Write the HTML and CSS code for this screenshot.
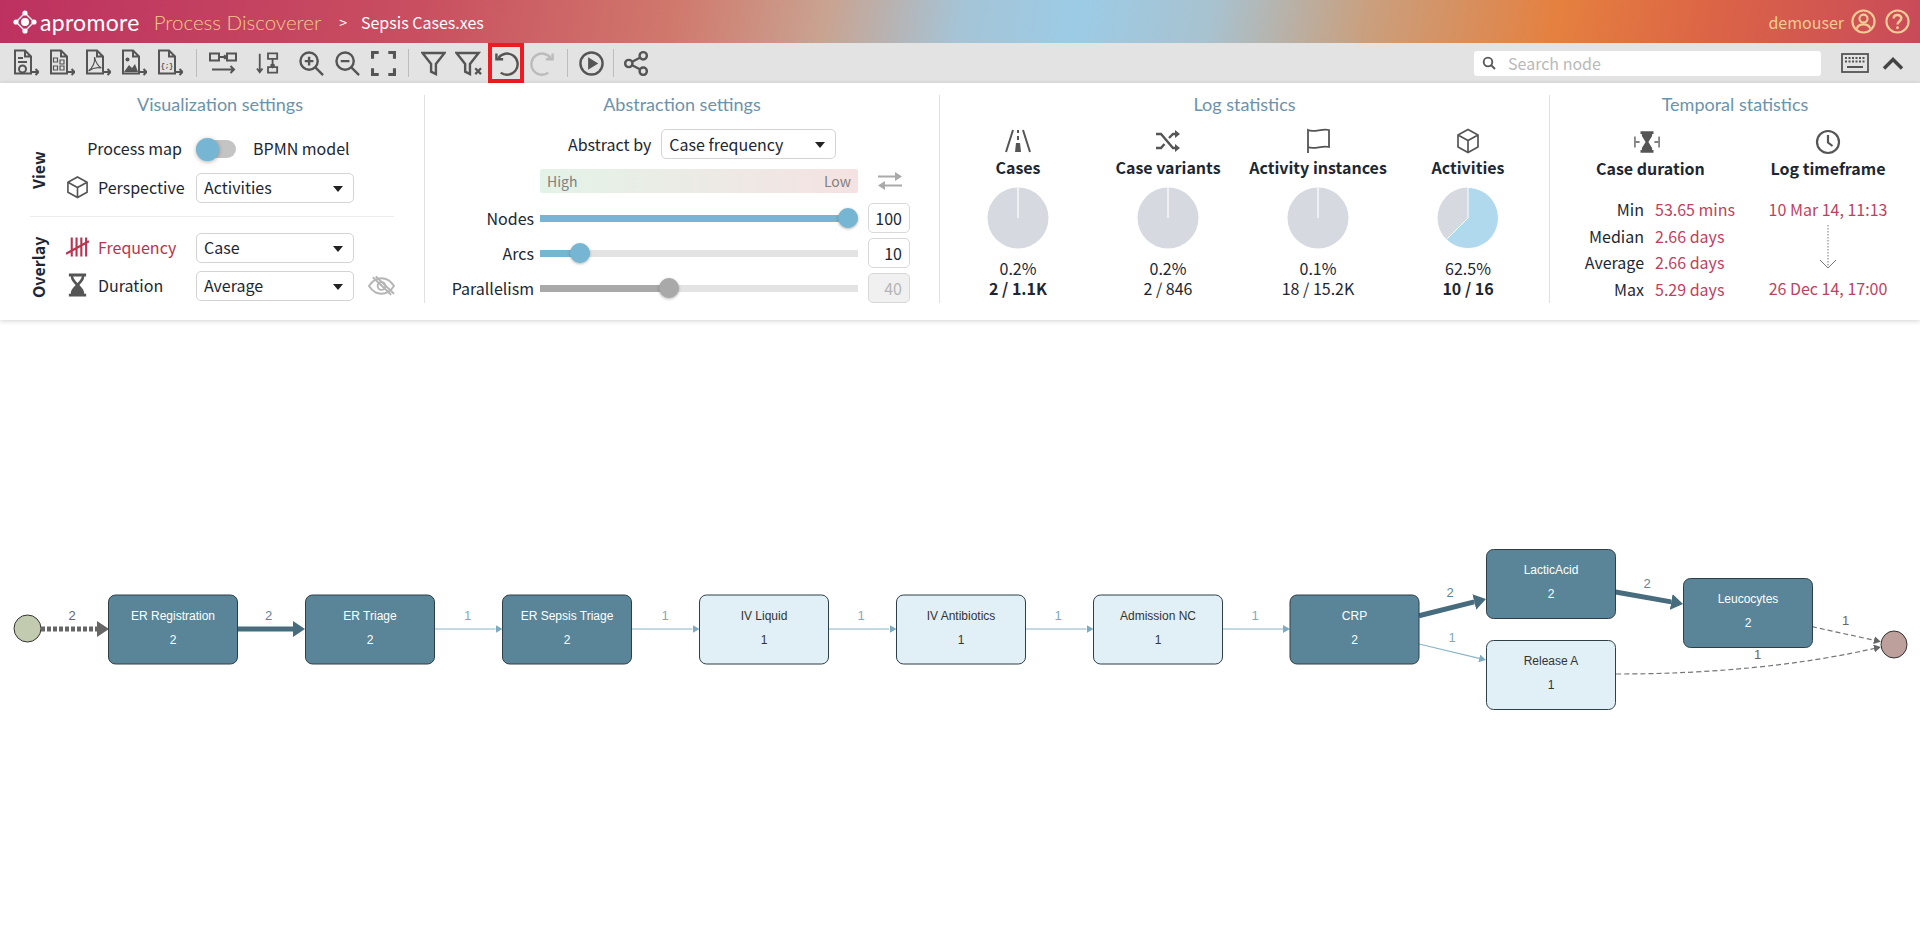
FILE: index.html
```html
<!DOCTYPE html>
<html>
<head>
    <meta charset="utf-8">
    <title>Process Discoverer</title>
    <link rel="stylesheet" href="styles.css">
</head>
<body>
    <!-- top header -->
    <header class="header">
        <svg class="logo-mark" viewBox="0 0 24 24" fill="#fff">
            <path d="M12 3 21 12 12 21 3 12z" fill="none" stroke="#fff" stroke-width="1.3"/>
            <circle cx="12" cy="12" r="4"/>
            <circle cx="12" cy="3" r="2.6"/>
            <circle cx="12" cy="21" r="2.6"/>
            <circle cx="3" cy="12" r="2.6"/>
            <circle cx="21" cy="12" r="2.6"/>
        </svg>
        <span class="logo-text">apromore</span>
        <span class="app-name">Process Discoverer</span>
        <span class="crumb">&gt;</span>
        <span class="file-name">Sepsis Cases.xes</span>
        <span class="user-name">demouser</span>
        <svg class="head-icon user-icon" viewBox="0 0 26 26" fill="none" stroke="#f7cb94" stroke-width="2.2">
            <circle cx="13" cy="13" r="11.5"/>
            <circle cx="13" cy="10" r="4.2"/>
            <path d="M6 20.5c1-3.5 3.5-4.5 7-4.5s6 1 7 4.5"/>
        </svg>
        <svg class="head-icon" viewBox="0 0 26 26" fill="none" stroke="#f7cb94" stroke-width="2.2">
            <circle cx="13" cy="13" r="11.5"/>
            <path d="M9 10c0-2.500 1.800-3.800 4-3.800s4 1.400 4 3.500c0 3-4 3-4 6.300" stroke-width="2.600"/>
            <circle cx="13" cy="19.500" r="1.500" fill="#f7cb94" stroke="none"/>
        </svg>
    </header>

    <!-- toolbar -->
    <nav class="toolbar">
        <div class="tool">
            <svg class="ico" viewBox="0 0 26 28">
                <path d="M2 1.500h10l6 6v17H2zM12 1.500v6h6"/><path d="M5 9h5M5 13h9"/>
                <circle cx="9.500" cy="20" r="3.500"/><path d="M18 23h7M22.500 20l3 3-3 3"/>
            </svg>
        </div>
        <div class="tool">
            <svg class="ico" viewBox="0 0 26 28">
                <path d="M2 1.500h10l6 6v17H2zM12 1.500v6h6"/>
                <path d="M4.500 9h4v4h-4zM11 11h4v4h-4zM4.500 17h4v4h-4zM11 17h4v4h-4z" stroke-width="1.200"/>
                <path d="M18 23h7M22.500 20l3 3-3 3"/>
            </svg>
        </div>
        <div class="tool">
            <svg class="ico" viewBox="0 0 26 28">
                <path d="M2 1.500h10l6 6v17H2zM12 1.500v6h6"/>
                <path d="M9.500 8c1 5-2 11-6 14 4-3 9-4 13-3-3-1-6-6-7-11z" stroke-width="1.200"/>
                <path d="M18 23h7M22.500 20l3 3-3 3"/>
            </svg>
        </div>
        <div class="tool">
            <svg class="ico" viewBox="0 0 26 28">
                <path d="M2 1.500h10l6 6v17H2zM12 1.500v6h6"/>
                <circle cx="6.500" cy="10.500" r="2" class="solid"/>
                <path d="M3 23l5-7 3 3 3-4 3 8z" class="solid"/>
                <path d="M18 23h7M22.500 20l3 3-3 3"/>
            </svg>
        </div>
        <div class="tool">
            <svg class="ico" viewBox="0 0 26 28">
                <path d="M2 1.500h10l6 6v17H2zM12 1.500v6h6"/>
                <text x="10" y="18.500" class="ico-text">{;}</text>
                <path d="M18 23h7M22.500 20l3 3-3 3"/>
            </svg>
        </div>
        <span class="tool-sep"></span>
        <div class="tool">
            <svg class="ico ico-wide" viewBox="0 0 28 22">
                <path d="M1 1.500h9v7H1zM18 1.500h9v7h-9zM10 5h7M15 3.300 17 5l-2 1.700"/>
                <path d="M3 17.500h22M21.500 14l3.500 3.500-3.500 3.500"/>
            </svg>
        </div>
        <div class="tool tool-push">
            <svg class="ico ico-wide" viewBox="0 0 26 24">
                <path d="M4 2v20M1 18l3 4 3-4"/>
                <path d="M13 1.500h10v6H13zM13 16.500h10v6H13zM18 7.500v9M16 13.500l2 3 2-3"/>
            </svg>
        </div>
        <div class="tool tool-push-sm">
            <svg class="ico ico-zoom" viewBox="0 0 26 26">
                <circle cx="10.500" cy="10.500" r="9"/><path d="M17 17l8 8M6 10.500h9M10.500 6v9"/>
            </svg>
        </div>
        <div class="tool">
            <svg class="ico ico-zoom" viewBox="0 0 26 26">
                <circle cx="10.500" cy="10.500" r="9"/><path d="M17 17l8 8M6 10.500h9"/>
            </svg>
        </div>
        <div class="tool">
            <svg class="ico ico-zoom ico-heavy" viewBox="0 0 26 26">
                <path d="M1.500 8V1.500H8M18 1.500h6.500V8M24.500 18v6.500H18M8 24.500H1.500V18"/>
            </svg>
        </div>
        <span class="tool-sep tool-sep-near"></span>
        <div class="tool">
            <svg class="ico ico-zoom" viewBox="0 0 26 26">
                <path d="M1.500 2h23L15.500 13.500V24l-5-2.500v-8z"/>
            </svg>
        </div>
        <div class="tool">
            <svg class="ico ico-filterx" viewBox="0 0 29 26">
                <path d="M1.500 2h23L15.500 13.500V24l-5-2.500v-8z"/><path d="M21 18l6 6M27 18l-6 6" stroke-width="2.400"/>
            </svg>
        </div>
        <div class="tool tool-active">
            <svg class="ico ico-zoom" viewBox="0 0 26 26">
                <path d="M4.500 7.500A11 11 0 1 1 7 22.500"/><path d="M2.500 2.500v6h7"/>
            </svg>
        </div>
        <div class="tool">
            <svg class="ico ico-zoom ico-off" viewBox="0 0 26 26">
                <path d="M21.500 7.500A11 11 0 1 0 19 22.500"/><path d="M23.500 2.500v6h-7"/>
            </svg>
        </div>
        <span class="tool-sep tool-sep-tight"></span>
        <div class="tool tool-narrow">
            <svg class="ico ico-zoom" viewBox="0 0 26 26">
                <circle cx="13" cy="13" r="11.500"/><path d="M9.500 6.500 20 13 9.500 19.500z" class="solid"/>
            </svg>
        </div>
        <span class="tool-sep tool-sep-last"></span>
        <div class="tool tool-narrow">
            <svg class="ico ico-zoom" viewBox="0 0 26 26">
                <circle cx="5" cy="13" r="3.800"/><circle cx="20" cy="5" r="3.800"/><circle cx="20" cy="21" r="3.800"/>
                <path d="M8.500 11.200 16.500 7M8.500 14.800 16.500 19"/>
            </svg>
        </div>

        <div class="search">
            <svg class="search-ico" viewBox="0 0 14 14" fill="none" stroke="#555" stroke-width="1.800">
                <circle cx="6" cy="6" r="4.300"/><path d="M9 9l4 4"/>
            </svg>
            <span>Search node</span>
        </div>
        <svg class="kbd-ico" viewBox="0 0 28 20" fill="none" stroke="#555" stroke-width="1.800">
            <rect x="1" y="1" width="26" height="18"/>
            <path d="M4 5h20M4 8.500h20" stroke-dasharray="2 1.500" stroke-width="1.800"/>
            <path d="M6 14h16" stroke-width="2"/>
        </svg>
        <svg class="chev-ico" viewBox="0 0 22 13" fill="none" stroke="#444" stroke-width="3.500">
            <path d="M2 11.500 11 2.500l9 9"/>
        </svg>
    </nav>

    <!-- settings and statistics -->
    <section class="panel">
        <div class="block block-vis">
            <h3 class="block-title">Visualization settings</h3>
            <div class="vis-group vis-view">
                <div class="vert-label">View</div>
                <div class="vis-rows">
                    <div class="vis-row vis-toggle">
                        <span class="vis-label vis-label-right">Process map</span>
                        <span class="toggle"><span class="toggle-knob"></span></span>
                        <span class="vis-label">BPMN model</span>
                    </div>
                    <div class="vis-row">
                        <span class="vis-label">
                            <svg class="lab-ico" viewBox="0 0 24 24" fill="none" stroke="#555" stroke-width="1.700">
                                <path d="M12 1.500 22 7v10.500L12 23 2 17.500V7zM2 7l10 5.500L22 7M12 12.500V23"/>
                            </svg>
                            Perspective
                        </span>
                        <div class="select select-vis">Activities<i class="caret"></i></div>
                    </div>
                </div>
            </div>
            <div class="vis-line"></div>
            <div class="vis-group vis-overlay">
                <div class="vert-label">Overlay</div>
                <div class="vis-rows">
                    <div class="vis-row">
                        <span class="vis-label vis-active">
                            <svg class="lab-ico" viewBox="0 0 24 24" fill="none" stroke="#b8344f" stroke-width="2.200">
                                <path d="M6 2v20M11 2v20M16 2v20M21 2v20M0 19 24 6"/>
                            </svg>
                            Frequency
                        </span>
                        <div class="select select-vis">Case<i class="caret"></i></div>
                    </div>
                    <div class="vis-row">
                        <span class="vis-label">
                            <svg class="lab-ico" viewBox="0 0 24 24" fill="#555">
                                <path d="M3 0h18v3h-2c0 4-3 6.500-5 9 2 2.500 5 5 5 9h2v3H3v-3h2c0-4 3-6.500 5-9-2-2.500-5-5-5-9H3zM7.500 3c.3 2.500 3 5 4.500 7 1.500-2 4.200-4.500 4.500-7z"/>
                            </svg>
                            Duration
                        </span>
                        <div class="select select-vis">Average<i class="caret"></i></div>
                        <svg class="eye-ico" viewBox="0 0 28 20" fill="none" stroke="#b5b5b5" stroke-width="2">
                            <path d="M1 10c4-6 8-8 13-8s9 2 13 8c-4 6-8 8-13 8S5 16 1 10z"/>
                            <circle cx="14" cy="10" r="4"/><path d="M5 1l19 18M8 0l19 18"/>
                        </svg>
                    </div>
                </div>
            </div>
        </div>

        <div class="block block-abs">
            <h3 class="block-title">Abstraction settings</h3>
            <div class="abs-by">
                <span>Abstract by</span>
                <div class="select select-abs">Case frequency<i class="caret"></i></div>
            </div>
            <div class="abs-scale">
                <div class="scale-bar"><span>High</span><span>Low</span></div>
                <svg class="swap-ico" viewBox="0 0 24 18" fill="#aaa">
                    <path d="M0 3.500h17V0l7 4.500-7 4.500V5.500H0z"/>
                    <path d="M24 12.500H7V9l-7 4.500L7 18v-3.500h17z"/>
                </svg>
            </div>
            <div class="slider-row">
                <span class="slider-label">Nodes</span>
                <div class="slider"><div class="slider-fill" style="width: 97%"></div><span class="slider-knob"></span></div>
                <div class="num-box">100</div>
            </div>
            <div class="slider-row">
                <span class="slider-label">Arcs</span>
                <div class="slider"><div class="slider-fill" style="width: 12.500%"></div><span class="slider-knob"></span></div>
                <div class="num-box">10</div>
            </div>
            <div class="slider-row slider-off">
                <span class="slider-label">Parallelism</span>
                <div class="slider"><div class="slider-fill" style="width: 40.500%"></div><span class="slider-knob"></span></div>
                <div class="num-box">40</div>
            </div>
        </div>

        <div class="block block-log">
            <h3 class="block-title">Log statistics</h3>
            <div class="log-grid">
                <div class="stat">
                    <svg class="stat-ico" viewBox="0 0 26 26" fill="none" stroke="#555" stroke-width="2">
                        <path d="M8 2 1 24M18 2l7 22M13 2v3M13 8v4" /><path d="M11 15h4l1 9h-6z" fill="#555" stroke="none"/>
                    </svg>
                    <b class="stat-name">Cases</b>
                    <svg class="pie" viewBox="0 0 64 64">
                        <circle cx="32" cy="32" r="30.500" fill="#d6d9e0"/><path d="M32 1.500V32" stroke="#fff" stroke-width="1.200"/>
                    </svg>
                    <span class="stat-pct">0.2%</span>
                    <b class="stat-num">2 / 1.1K</b>
                </div>
                <div class="stat">
                    <svg class="stat-ico" viewBox="0 0 26 26" fill="none" stroke="#555" stroke-width="2.400">
                        <path d="M1 6h5l12 14h4M1 20h5l3.500-4M14 10l4-4h4"/>
                        <path d="M20 2l5 4-5 4zM20 16l5 4-5 4z" fill="#555" stroke="none"/>
                    </svg>
                    <b class="stat-name">Case variants</b>
                    <svg class="pie" viewBox="0 0 64 64">
                        <circle cx="32" cy="32" r="30.500" fill="#d6d9e0"/><path d="M32 1.500V32" stroke="#fff" stroke-width="1.200"/>
                    </svg>
                    <span class="stat-pct">0.2%</span>
                    <span class="stat-num">2 / 846</span>
                </div>
                <div class="stat">
                    <svg class="stat-ico" viewBox="0 0 26 26" fill="none" stroke="#555" stroke-width="1.800">
                        <path d="M3 25V2c6 3 14-2 21 0v17c-7-2-15 3-21 0"/>
                    </svg>
                    <b class="stat-name">Activity instances</b>
                    <svg class="pie" viewBox="0 0 64 64">
                        <circle cx="32" cy="32" r="30.500" fill="#d6d9e0"/><path d="M32 1.500V32" stroke="#fff" stroke-width="1.200"/>
                    </svg>
                    <span class="stat-pct">0.1%</span>
                    <span class="stat-num">18 / 15.2K</span>
                </div>
                <div class="stat">
                    <svg class="stat-ico" viewBox="0 0 24 26" fill="none" stroke="#555" stroke-width="1.700">
                        <path d="M12 1.500 22 7v12L12 24.500 2 19V7zM2 7l10 5.500L22 7M12 12.500v12"/>
                    </svg>
                    <b class="stat-name">Activities</b>
                    <svg class="pie" viewBox="0 0 64 64">
                        <circle cx="32" cy="32" r="30.500" fill="#d6d9e0"/>
                        <path d="M32 32V1.500A30.500 30.500 0 1 1 10.400 53.600z" fill="#b0d9ee" stroke="#fff" stroke-width="1"/>
                    </svg>
                    <span class="stat-pct">62.5%</span>
                    <b class="stat-num">10 / 16</b>
                </div>
            </div>
        </div>

        <div class="block block-temp">
            <h3 class="block-title">Temporal statistics</h3>
            <div class="temp-grid">
                <div class="temp-col">
                    <svg class="stat-ico" viewBox="0 0 28 26" fill="#555">
                        <path d="M7 1.500h14v3h-1.500v2L15.500 13l4 6.500v2H21v3H7v-3h1.500v-2l4-6.500-4-6.500v-2H7z"/>
                        <path d="M1 7v12M27 7v12M2 13h4M26 13h-4" stroke="#555" stroke-width="1.400"/>
                    </svg>
                    <b class="stat-name">Case duration</b>
                    <div class="dur-table">
                        <span class="dur-key">Min</span><span class="dur-val">53.65 mins</span>
                        <span class="dur-key">Median</span><span class="dur-val">2.66 days</span>
                        <span class="dur-key">Average</span><span class="dur-val">2.66 days</span>
                        <span class="dur-key">Max</span><span class="dur-val">5.29 days</span>
                    </div>
                </div>
                <div class="temp-col">
                    <svg class="stat-ico" viewBox="0 0 26 26" fill="none" stroke="#555" stroke-width="2.200">
                        <circle cx="13" cy="13" r="11"/><path d="M13 6v7.500l4.500 3.500"/>
                    </svg>
                    <b class="stat-name">Log timeframe</b>
                    <div class="time-col">
                        <span class="dur-val">10 Mar 14, 11:13</span>
                        <svg class="time-arrow" viewBox="0 0 18 44" fill="none" stroke="#777">
                            <path d="M9 0v43" stroke-dasharray="1.500 1.500"/><path d="M1 35l8 8 8-8"/>
                        </svg>
                        <span class="dur-val">26 Dec 14, 17:00</span>
                    </div>
                </div>
            </div>
        </div>
    </section>

    <!-- process map -->
    <main class="canvas">
        <svg class="map" viewBox="0 320 1920 610">
            <defs>
                <marker id="head-gray" markerUnits="userSpaceOnUse" markerWidth="12" markerHeight="16" refX="0" refY="8" orient="auto"><path d="M0 0 12 8 0 16z" fill="#666"/></marker>
                <marker id="head-dark" markerUnits="userSpaceOnUse" markerWidth="12" markerHeight="16" refX="0" refY="8" orient="auto"><path d="M0 0 12 8 0 16z" fill="#476c7d"/></marker>
                <marker id="head-light" markerUnits="userSpaceOnUse" markerWidth="7" markerHeight="8" refX="0" refY="4" orient="auto"><path d="M0 0 7 4 0 8z" fill="#7fabc1"/></marker>
                <marker id="head-thin" markerUnits="userSpaceOnUse" markerWidth="7" markerHeight="8" refX="0" refY="4" orient="auto"><path d="M0 0 7 4 0 8z" fill="#666"/></marker>
            </defs>

            <ellipse class="start" cx="27.500" cy="628.500" rx="13.500" ry="13.500"/>
            <ellipse class="end" cx="1894" cy="644.500" rx="13" ry="13.500"/>

            <path class="edge-gray" d="M41 629H97" marker-end="url(#head-gray)"/>
            <path class="edge-dark" d="M237.500 629H293" marker-end="url(#head-dark)"/>
            <path class="edge-light" d="M434.500 629H495.500" marker-end="url(#head-light)"/>
            <path class="edge-light" d="M631.500 629H692.500" marker-end="url(#head-light)"/>
            <path class="edge-light" d="M828.500 629H889.500" marker-end="url(#head-light)"/>
            <path class="edge-light" d="M1025.500 629H1086.500" marker-end="url(#head-light)"/>
            <path class="edge-light" d="M1222.500 629H1283" marker-end="url(#head-light)"/>
            <path class="edge-dark" d="M1419 615.700 1474.300 601.900" marker-end="url(#head-dark)"/>
            <path class="edge-dark" d="M1615.600 592 1671.200 601.900" marker-end="url(#head-dark)"/>
            <path class="edge-light" d="M1419 644 1479.200 658.400" marker-end="url(#head-light)"/>
            <path class="edge-dash" d="M1812 626.700 1874 640.200" marker-end="url(#head-thin)"/>
            <path class="edge-dash" d="M1616 674Q1760 674 1874 648.500" marker-end="url(#head-thin)"/>

            <text class="lbl lbl-gray" x="72" y="620">2</text>
            <text class="lbl lbl-dark" x="268.500" y="620">2</text>
            <text class="lbl lbl-light" x="467.500" y="620">1</text>
            <text class="lbl lbl-light" x="665" y="620">1</text>
            <text class="lbl lbl-light" x="861" y="620">1</text>
            <text class="lbl lbl-light" x="1058" y="620">1</text>
            <text class="lbl lbl-light" x="1255" y="620">1</text>
            <text class="lbl lbl-dark" x="1450" y="597">2</text>
            <text class="lbl lbl-light" x="1452" y="642">1</text>
            <text class="lbl lbl-dark" x="1647" y="588">2</text>
            <text class="lbl lbl-gray" x="1845.500" y="624.500">1</text>
            <text class="lbl lbl-gray" x="1757.500" y="658.500">1</text>

            <g class="node node-dark"><rect x="108.500" y="595" width="129" height="69" rx="7"/><text x="173" y="620">ER Registration</text><text x="173" y="644">2</text></g>
            <g class="node node-dark"><rect x="305.500" y="595" width="129" height="69" rx="7"/><text x="370" y="620">ER Triage</text><text x="370" y="644">2</text></g>
            <g class="node node-dark"><rect x="502.500" y="595" width="129" height="69" rx="7"/><text x="567" y="620">ER Sepsis Triage</text><text x="567" y="644">2</text></g>
            <g class="node node-light"><rect x="699.500" y="595" width="129" height="69" rx="7"/><text x="764" y="620">IV Liquid</text><text x="764" y="644">1</text></g>
            <g class="node node-light"><rect x="896.500" y="595" width="129" height="69" rx="7"/><text x="961" y="620">IV Antibiotics</text><text x="961" y="644">1</text></g>
            <g class="node node-light"><rect x="1093.500" y="595" width="129" height="69" rx="7"/><text x="1158" y="620">Admission NC</text><text x="1158" y="644">1</text></g>
            <g class="node node-dark"><rect x="1290" y="595" width="129" height="69" rx="7"/><text x="1354.500" y="620">CRP</text><text x="1354.500" y="644">2</text></g>
            <g class="node node-dark"><rect x="1486.500" y="549.500" width="129" height="69" rx="7"/><text x="1551" y="574">LacticAcid</text><text x="1551" y="598">2</text></g>
            <g class="node node-light"><rect x="1486.500" y="640.500" width="129" height="69" rx="7"/><text x="1551" y="665">Release A</text><text x="1551" y="689">1</text></g>
            <g class="node node-dark"><rect x="1683.500" y="578.500" width="129" height="69" rx="7"/><text x="1748" y="603">Leucocytes</text><text x="1748" y="627">2</text></g>
        </svg>
    </main>
</body>
</html>
```

FILE: styles.css
```css
/* page */
* {
    box-sizing: border-box;
}

html, body {
    height: 100%;
}

body {
    margin: 0;
    overflow: hidden;
    background-color: #fff;
    color: #1c2733;
    font-family: "Noto Sans CJK SC", "Noto Sans", sans-serif;
    font-size: 16px;
    line-height: 20px;
}

/* header */
.header {
    display: flex;
    align-items: center;
    height: 43px;
    padding: 0 10px 0 13px;
    background: linear-gradient(100deg, #bd3160 0%, #c94f60 22%, #d0786c 35%, #c9a391 43%, #a5c4d6 50%, #9ccbe6 56%, #a8c2cf 63%, #c9a07f 71%, #e5803f 81%, #dc6446 89%, #c84a5a 100%);
}

.logo-mark {
    width: 24px;
    height: 24px;
}

.logo-text {
    margin-left: 3px;
    color: #fff;
    font-family: Lato, sans-serif;
    font-size: 23px;
    font-weight: 400;
    letter-spacing: 0.3px;
}

.app-name {
    margin-left: 14px;
    color: #f6c98c;
    font-family: Lato, sans-serif;
    font-size: 20.500px;
    font-weight: 300;
}

.crumb {
    margin-left: 18px;
    color: #fff;
    font-size: 14px;
}

.file-name {
    margin-left: 14px;
    color: #fff;
    font-size: 16px;
}

.user-name {
    margin-left: auto;
    color: #f7cb94;
    font-size: 16px;
}

.head-icon {
    width: 25px;
    height: 25px;
    margin-left: 9px;
}

.user-icon {
    margin-left: 7px;
}

/* toolbar */
.toolbar {
    display: flex;
    align-items: center;
    height: 40px;
    padding: 0 16px 0 8px;
    background-color: #e3e3e3;
}

.tool {
    display: flex;
    align-items: center;
    justify-content: center;
    flex: none;
    width: 36px;
    height: 40px;
}

.tool-push {
    margin-left: 9px;
}

.tool-push-sm {
    margin-left: 7px;
}

.tool-narrow {
    width: 32px;
}

.tool-active {
    margin-left: 1px;
    outline: 4px solid #ed1c24;
    outline-offset: -4px;
}

.tool-sep {
    flex: none;
    width: 1px;
    height: 28px;
    margin: 0 8px;
    background-color: #bdbdbd;
}

.tool-sep-near {
    margin: 0 6px 0 7px;
}

.tool-sep-tight {
    margin: 0 7px;
}

.tool-sep-last {
    margin: 0 6px;
}

.ico {
    width: 26px;
    height: 28px;
    fill: none;
    stroke: #555;
    stroke-width: 2;
}

.ico .solid {
    fill: #555;
    stroke: none;
}

.ico-text {
    fill: #555;
    stroke: none;
    font-family: "Liberation Mono", monospace;
    font-size: 7px;
    font-weight: 700;
    text-anchor: middle;
}

.ico-wide {
    width: 28px;
    height: 22px;
}

.ico-zoom {
    width: 25px;
    height: 25px;
    stroke-width: 2.500;
}

.ico-heavy {
    stroke-width: 3.400;
}

.ico-filterx {
    width: 28px;
    height: 25px;
    stroke-width: 2.500;
}

.ico-off {
    stroke: #bbb;
}

.search {
    display: flex;
    align-items: center;
    width: 347px;
    height: 25px;
    margin-left: auto;
    padding-left: 8px;
    border-radius: 3px;
    background-color: #fff;
    color: #b9b9b9;
}

.search-ico {
    width: 14px;
    height: 14px;
    margin-right: 12px;
}

.kbd-ico {
    width: 28px;
    height: 20px;
    margin-left: 20px;
}

.chev-ico {
    width: 22px;
    height: 13px;
    margin-left: 13px;
}

/* panel */
.panel {
    display: flex;
    height: 237px;
    padding-top: 12px;
    background-color: #fff;
    box-shadow: 0 1px 5px rgba(0, 0, 0, 0.18);
    position: relative;
}

.block {
    flex: none;
    height: 208px;
    border-right: 1px solid #e0e0e0;
}

.block-vis {
    width: 425px;
}

.block-abs {
    width: 515px;
}

.block-log {
    width: 610px;
}

.block-temp {
    width: 370px;
    border-right: 0;
}

.block-title {
    margin: 0;
    color: #6b93ad;
    font-family: Lato, sans-serif;
    font-size: 18px;
    font-weight: 400;
    line-height: 18px;
    text-align: center;
}

.block-vis .block-title {
    padding-left: 16px;
}

/* visualization settings */
.vis-group {
    display: flex;
}

.vis-view {
    margin-top: 25px;
}

.vis-overlay {
    margin-top: 16px;
}

.vert-label {
    display: flex;
    align-items: center;
    justify-content: center;
    width: 24px;
    margin: 0 16px 0 26px;
    font-weight: 700;
    writing-mode: vertical-rl;
    transform: rotate(180deg);
}

.vis-rows {
    display: flex;
    flex-direction: column;
    gap: 8px;
}

.vis-view .vis-rows {
    gap: 13px;
}

.vis-row {
    display: grid;
    grid-template-columns: 130px 158px 41px;
    align-items: center;
    height: 30px;
}

.vis-toggle {
    grid-template-columns: 116px 71px auto;
    height: 22px;
}

.vis-label {
    display: flex;
    align-items: center;
    gap: 9px;
    padding-bottom: 2px;
    white-space: nowrap;
}

.vis-label-right {
    justify-content: flex-end;
}

.vis-active {
    color: #b8344f;
}

.lab-ico {
    flex: none;
    width: 23px;
    height: 24px;
}

.toggle {
    position: relative;
    width: 40px;
    height: 18px;
    margin-left: 14px;
    border-radius: 9px;
    background-color: #c4c4c4;
}

.toggle-knob {
    position: absolute;
    top: -2px;
    left: 0;
    width: 23px;
    height: 23px;
    border-radius: 50%;
    background-color: #76b6d3;
    box-shadow: 0 1px 4px rgba(0, 0, 0, 0.3);
}

.select {
    position: relative;
    height: 30px;
    padding-left: 7px;
    border: 1px solid #d3d3d3;
    border-radius: 5px;
    background-color: #fff;
    line-height: 26px;
}

.caret {
    position: absolute;
    top: 12px;
    right: 10px;
    border-top: 6px solid #222;
    border-left: 5px solid transparent;
    border-right: 5px solid transparent;
}

.eye-ico {
    width: 27px;
    height: 20px;
    margin-left: 14px;
}

.vis-line {
    width: 364px;
    height: 1px;
    margin: 13px 0 0 30px;
    background-color: #ececec;
}

/* abstraction settings */
.abs-by {
    display: flex;
    align-items: center;
    height: 30px;
    margin-top: 16px;
    padding-left: 143px;
    gap: 10px;
}

.select-abs {
    width: 175px;
    line-height: 28px;
}

.abs-scale {
    display: flex;
    align-items: center;
    margin: 10px 0 10px 115px;
}

.scale-bar {
    display: flex;
    justify-content: space-between;
    width: 318px;
    height: 24px;
    padding: 0 7px;
    border-radius: 2px;
    background: linear-gradient(90deg, #e3f3e7, #f5e2e3);
    color: #808080;
    font-size: 14px;
    line-height: 24px;
}

.swap-ico {
    width: 24px;
    height: 18px;
    margin-left: 20px;
}

.slider-row {
    display: grid;
    grid-template-columns: 109px 318px 42px;
    column-gap: 6px;
    align-items: center;
    height: 30px;
    margin-bottom: 5px;
}

.slider-row .num-box {
    margin-left: 4px;
}

.slider-label {
    text-align: right;
}

.slider {
    position: relative;
    display: flex;
    align-items: center;
    height: 7px;
    background-color: #e3e3e3;
}

.slider-fill {
    position: relative;
    height: 7px;
    background-color: #76b6d3;
}

.slider-knob {
    width: 20px;
    height: 20px;
    margin-left: -10px;
    border-radius: 50%;
    background-color: #76b6d3;
    box-shadow: 0 1px 3px rgba(0, 0, 0, 0.3);
    position: relative;
}

.slider-off .slider-fill,
.slider-off .slider-knob {
    background-color: #a9a9a9;
}

.num-box {
    width: 42px;
    height: 30px;
    padding-right: 7px;
    border: 1px solid #d8d8d8;
    border-radius: 5px;
    background-color: #fff;
    line-height: 28px;
    text-align: right;
}

.slider-off .num-box {
    background-color: #f0f0f0;
    color: #b5b5b5;
}

/* log statistics */
.log-grid {
    display: grid;
    grid-template-columns: repeat(4, 150px);
    margin-top: 15px;
    padding-left: 3px;
}

.stat, .temp-col {
    display: flex;
    flex-direction: column;
    align-items: center;
}

.stat-ico {
    width: 26px;
    height: 26px;
}

.stat-name {
    margin-top: 3px;
    white-space: nowrap;
}

.pie {
    width: 64px;
    height: 64px;
    margin: 9px 0 8px;
}

.stat-pct, .stat-num {
    line-height: 20px;
}

/* temporal statistics */
.temp-grid {
    display: grid;
    grid-template-columns: 196px 160px;
    margin-top: 16px;
    padding-left: 2px;
}

.temp-col:first-child {
    align-items: flex-start;
    padding-left: 45px;
}

.temp-col:first-child .stat-ico {
    margin-left: 37px;
}

.temp-col:first-child .stat-name {
    margin-left: -1px;
}

.dur-table {
    display: grid;
    grid-template-columns: 92px auto;
    column-gap: 11px;
    row-gap: 6.500px;
    margin: 21px 0 0 -45px;
    white-space: nowrap;
}

.dur-key {
    text-align: right;
}

.dur-val {
    color: #bf3f5f;
    white-space: nowrap;
}

.time-col {
    display: flex;
    flex-direction: column;
    align-items: center;
    margin-top: 21px;
}

.time-arrow {
    width: 18px;
    height: 44px;
    margin: 6px 0 9px;
}

/* process map */
.canvas {
    height: 610px;
}

.map {
    display: block;
    width: 1920px;
    height: 610px;
}

.start {
    fill: #c2cbb0;
    stroke: #333;
}

.end {
    fill: #bd9f9c;
    stroke: #333;
}

.edge-gray, .edge-dark, .edge-light, .edge-dash {
    fill: none;
}

.edge-gray {
    stroke: #666;
    stroke-width: 5;
    stroke-dasharray: 4 2;
}

.edge-dark {
    stroke: #476c7d;
    stroke-width: 5;
}

.edge-light {
    stroke: #8ab4c8;
    stroke-width: 1.200;
}

.edge-dash {
    stroke: #777;
    stroke-width: 1.200;
    stroke-dasharray: 5 3;
}

.lbl {
    font-family: "Liberation Sans", sans-serif;
    font-size: 13px;
    text-anchor: middle;
}

.lbl-gray {
    fill: #666;
}

.lbl-dark {
    fill: #5a8599;
}

.lbl-light {
    fill: #7fabc1;
}

.node rect {
    stroke: #2e3f47;
    stroke-width: 1;
}

.node text {
    font-family: "Liberation Sans", sans-serif;
    font-size: 12px;
    text-anchor: middle;
}

.node-dark rect {
    fill: #5a8599;
}

.node-dark text {
    fill: #fff;
}

.node-light rect {
    fill: #e1f0f7;
}

.node-light text {
    fill: #333;
}
```
